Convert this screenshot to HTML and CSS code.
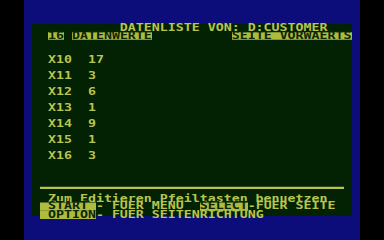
FILE: index.html
```html
<!DOCTYPE html>
<html lang="de">
<head>
    <meta charset="UTF-8">
    <title>Datenliste</title>
    <link rel="stylesheet" href="styles.css">
</head>
<body>
    <!-- blue frame around the 40x24 text screen -->
    <div class="frame">
        <div class="screen">
            <div class="text">
                <div class="row">           DATENLISTE VON: D:CUSTOMER</div>
                <div class="row">  <span class="inv">16</span> <span class="inv">DATENWERTE</span>          <span class="inv">SEITE VORWAERTS</span></div>
                <div class="row"></div>
                <div class="row"></div>
                <div class="row">  X10  17</div>
                <div class="row"></div>
                <div class="row">  X11  3</div>
                <div class="row"></div>
                <div class="row">  X12  6</div>
                <div class="row"></div>
                <div class="row">  X13  1</div>
                <div class="row"></div>
                <div class="row">  X14  9</div>
                <div class="row"></div>
                <div class="row">  X15  1</div>
                <div class="row"></div>
                <div class="row">  X16  3</div>
                <div class="row"></div>
                <div class="row"></div>
                <div class="row"></div>
                <div class="row"><div class="rule"></div></div>
                <div class="row">  Zum Editieren Pfeiltasten benuetzen</div>
                <div class="row"> <span class="inv"> START </span>- FUER MENU  <span class="inv">SELECT</span>-FUER SEITE</div>
                <div class="row"> <span class="inv"> OPTION</span>- FUER SEITENRICHTUNG</div>
            </div>
        </div>
    </div>
</body>
</html>
```

FILE: styles.css
```css
/* black surround, like the edge of the TV picture */
body {
    margin: 0;
    background: #000;
    width: 384px;
    height: 240px;
    overflow: hidden;
}

.frame {
    width: 336px;
    height: 240px;
    margin-left: 24px;
    background: #0c0c7a;
    padding-top: 24px;
    box-sizing: border-box;
}

/* 40 columns x 24 rows, 8px per cell */
.screen {
    width: 320px;
    height: 192px;
    margin-left: 8px;
    background: #032103;
    color: #b8c450;
    font-family: "DejaVu Sans Mono", "Liberation Mono", monospace;
    font-weight: bold;
    font-size: 13.28px;
}

/* text is set a bit tall and squashed, so the glyphs come out 8x8 like the real font */
.text {
    transform: scaleY(0.75);
    transform-origin: top left;
}

.row {
    height: 10.667px;
    line-height: 10.667px;
    white-space: pre;
}

.inv {
    display: inline-block;
    height: 10.667px;
    line-height: 10.667px;
    vertical-align: top;
    background: #aebc3e;
    color: #0c2608;
}

.rule {
    width: 304px;
    height: 2.667px;
    margin-left: 8px;
    margin-top: 4px;
    background: #b8c450;
}
```
